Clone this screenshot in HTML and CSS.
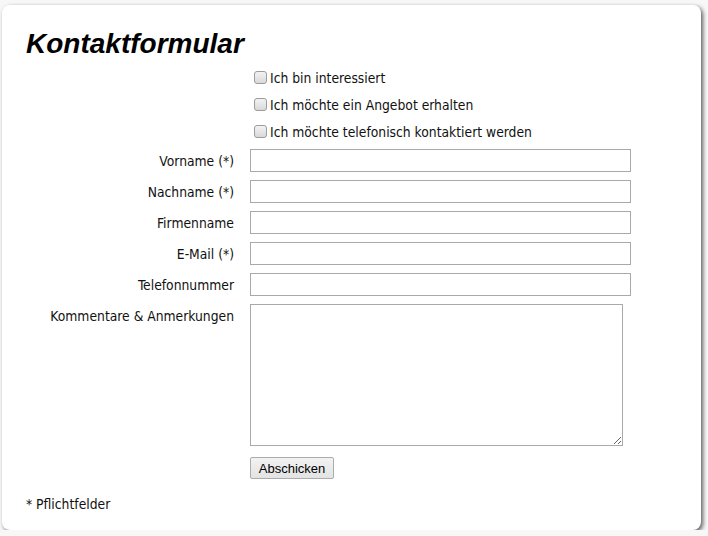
FILE: index.html
```html
<!DOCTYPE html>
<html lang="de"><head><meta charset="utf-8">
    <title>Kontaktformular</title>
    <link rel="stylesheet" href="styles.css">
    </head><body>
    <div class="card">
        <h1>Kontaktformular</h1>
        <form class="contact">
            <div class="row check"><span class="label"></span><label><input type="checkbox"> <span>Ich bin interessiert</span></label></div>
            <div class="row check"><span class="label"></span><label><input type="checkbox"> <span>Ich möchte ein Angebot erhalten</span></label></div>
            <div class="row check"><span class="label"></span><label><input type="checkbox"> <span>Ich möchte telefonisch kontaktiert werden</span></label></div>
            <div class="row field"><label class="label" for="vorname">Vorname (*)</label><input id="vorname" type="text"></div>
            <div class="row field"><label class="label" for="nachname">Nachname (*)</label><input id="nachname" type="text"></div>
            <div class="row field"><label class="label" for="firma">Firmenname</label><input id="firma" type="text"></div>
            <div class="row field"><label class="label" for="email">E-Mail (*)</label><input id="email" type="text"></div>
            <div class="row field"><label class="label" for="telefon">Telefonnummer</label><input id="telefon" type="text"></div>
            <div class="row field"><label class="label" for="kommentar">Kommentare &amp; Anmerkungen</label><textarea id="kommentar"></textarea></div>
            <div class="row submit"><span class="label"></span><button type="button">Abschicken</button></div>
        </form>
        <p class="note">* Pflichtfelder</p>
    </div>
    </body></html>
```

FILE: styles.css
```css
body {
    margin: 0;
    background: #f7f7f7;
    font-family: "DejaVu Sans Condensed", "DejaVu Sans", sans-serif;
    font-size: 13.75px;
    color: #111;
}

.card {
    margin: 5px 0 0 2px;
    width: 675px;
    height: 501px;
    padding: 24px 0 0 24px;
    background: #fff;
    border-radius: 8px;
    box-shadow: 2px 2px 4px #5e5e5e;
}

h1 {
    margin: 0;
    font-family: "Liberation Sans", Arial, sans-serif;
    font-style: italic;
    font-weight: bold;
    font-size: 28px;
    line-height: 30px;
    color: #000;
}

.contact {
    margin-top: 5px;
}

.row {
    display: flex;
    align-items: flex-start;
}
.row .label {
    width: 208px;
    margin-right: 16px;
    flex: none;
    text-align: right;
    line-height: 23px;
    padding-top: 1px;
}

.check {
    height: 27px;
    line-height: 27px;
}
.check label {
    display: flex;
    align-items: center;
    height: 27px;
}
.check label span {
    padding-top: 2px;
}
.check input {
    -webkit-appearance: none;
    appearance: none;
    box-sizing: border-box;
    margin: 0 3px 0 4px;
    width: 13px;
    height: 13px;
    border: 1px solid #9c9c9c;
    border-radius: 3px;
    background: linear-gradient(#f3f3f3, #d9d9d9);
}

.field {
    margin-top: 4px;
}
.field input {
    box-sizing: border-box;
    width: 381px;
    height: 23px;
    margin: 0 0 4px;
    border: 1px solid #a9a9a9;
    border-radius: 0;
    padding: 1px 3px;
    font: inherit;
}
.field textarea {
    box-sizing: border-box;
    width: 373px;
    height: 142px;
    margin: 0;
    border: 1px solid #a9a9a9;
    font: inherit;
}

.submit {
    margin-top: 11px;
}
.submit button {
    height: 22px;
    width: 84px;
    padding: 0;
    font-family: "Liberation Sans", Arial, sans-serif;
    font-size: 13px;
    color: #000;
    border: 1px solid #acacac;
    border-radius: 2px;
    background: linear-gradient(#f2f2f2, #e3e3e3);
}

.note {
    margin: 17px 0 0;
    line-height: 16px;
}
```
